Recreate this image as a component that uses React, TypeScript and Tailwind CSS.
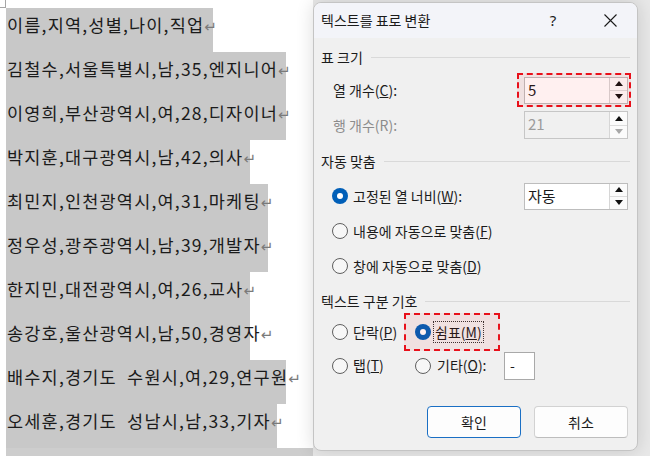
const lines = [
  { text: "이름,지역,성별,나이,직업", w: "w-[207px]" },
  { text: "김철수,서울특별시,남,35,엔지니어", w: "w-[280px]" },
  { text: "이영희,부산광역시,여,28,디자이너", w: "w-[280px]" },
  { text: "박지훈,대구광역시,남,42,의사", w: "w-[244px]" },
  { text: "최민지,인천광역시,여,31,마케팅", w: "w-[262px]" },
  { text: "정우성,광주광역시,남,39,개발자", w: "w-[262px]" },
  { text: "한지민,대전광역시,여,26,교사", w: "w-[244px]" },
  { text: "송강호,울산광역시,남,50,경영자", w: "w-[244px]" },
  { text: "배수지,경기도  수원시,여,29,연구원", w: "w-[280px]" },
  { text: "오세훈,경기도  성남시,남,33,기자", w: "w-[271px]" },
];

const Tri = ({ down, gray }: { down?: boolean; gray?: boolean }) => (
  <svg width="8" height="5" viewBox="0 0 8 5">
    <polygon
      points={down ? "0,0 8,0 4,5" : "0,5 8,5 4,0"}
      fill={gray ? "#a8a8a8" : "#111"}
    />
  </svg>
);

const Spin = ({ value, disabled }: { value: string; disabled?: boolean }) => (
  <div
    className={
      disabled
        ? "flex h-[28px] w-[104px] border border-[#c6c6c6] bg-[#f0f0f0]"
        : "flex h-[27px] w-[104px] border border-[#bdbdbd] bg-white"
    }
  >
    <div
      className={
        disabled
          ? "flex-1 pl-[3px] text-[15px] leading-[24px] text-[#9c9c9c]"
          : "flex-1 pl-[3px] text-[15px] leading-[24px] text-[#1b1b1b]"
      }
    >
      {value}
    </div>
    <div className="flex w-[18px] flex-col border-l border-[#d6d6d6]">
      <div className="flex flex-1 items-center justify-center border-b border-[#dcdcdc] bg-[#fbfbfb]">
        <Tri />
      </div>
      <div className="flex flex-1 items-center justify-center bg-[#fbfbfb]">
        <Tri down gray={disabled} />
      </div>
    </div>
  </div>
);

const Radio = ({ checked }: { checked?: boolean }) =>
  checked ? (
    <div className="flex h-[16px] w-[16px] shrink-0 items-center justify-center rounded-full bg-[#005fb8]">
      <div className="h-[6px] w-[6px] rounded-full bg-white" />
    </div>
  ) : (
    <div className="h-[16px] w-[16px] shrink-0 rounded-full border border-[#5f5f5f] bg-[#f7f7f7]" />
  );

const Section = ({ label }: { label: string }) => (
  <div className="flex h-[20px] items-center pl-[7px] pr-[7px]">
    <span className="text-[14px] leading-[20px] text-[#1b1b1b]">{label}</span>
    <div className="ml-[8px] h-px flex-1 bg-[#d9d9d9]" />
  </div>
);

export default function App() {
  return (
    <div className="flex h-[456px] w-[650px] overflow-hidden bg-white font-['Noto_Sans_CJK_KR','Noto_Sans',sans-serif] text-[#1b1b1b]">
      {/* document page */}
      <div className="flex w-[313px] shrink-0 flex-col">
        <div className="h-[8px]">
          <div className="h-[8px] w-[6px] border-b border-r border-[#a6a6a6]" />
        </div>
        {lines.map((l) => (
          <div key={l.text} className={`ml-[6px] h-[44px] bg-[#c8c8c8] ${l.w}`}>
            <div className="whitespace-pre pl-[1px] text-[17.5px] leading-[34px] tracking-[1.2px]">
              {l.text}
              <span className="font-['DejaVu_Sans',sans-serif] text-[15px] tracking-normal text-[#7a7a7a]">↵</span>
            </div>
          </div>
        ))}
        <div className="ml-[6px] flex-1 bg-[#cdcdcd]" />
      </div>

      {/* dialog area */}
      <div className="flex-1 bg-[#e8e8e8] pt-[2px]">
        <div className="relative flex h-[449px] w-[325px] flex-col overflow-hidden rounded-[8px] border border-[#c4c4c4] bg-[#f0f0f0] shadow-[0_0_18px_rgba(0,0,0,0.14)]">
          <div className="flex h-[35px] shrink-0 items-center bg-[#f3f4f9] pl-[7px]">
            <span className="text-[14px]">텍스트를 표로 변환</span>
            <div className="ml-auto w-[46px] text-center font-['Noto_Sans',sans-serif] text-[15px]">?</div>
            <div className="w-[7px]" />
            <div className="flex w-[54px] items-center justify-center">
              <svg width="13" height="13" viewBox="0 0 13 13">
                <path d="M0.5 0.5 L12.5 12.5 M12.5 0.5 L0.5 12.5" stroke="#1b1b1b" strokeWidth="1.1" />
              </svg>
            </div>
          </div>

          <div className="mt-[9px]">
            <Section label="표 크기" />
          </div>

          <div className="relative mt-[10px] flex h-[26px] items-center pl-[19px] pr-[9px] text-[14px]">
            <span>
              열 개수(<u>C</u>):
            </span>
            <div className="ml-auto">
              <Spin value="5" />
            </div>
            <div className="pointer-events-none absolute left-[203px] top-[-4px] h-[34px] w-[114px] border-2 border-dashed border-[#e8101a] bg-[rgba(255,0,0,0.06)]" />
          </div>

          <div className="mt-[8px] flex h-[28px] items-center pl-[19px] pr-[9px] text-[14px]">
            <span className="text-[#8c8c8c]">행 개수(R):</span>
            <div className="ml-auto">
              <Spin value="21" disabled />
            </div>
          </div>

          <div className="mt-[12px]">
            <Section label="자동 맞춤" />
          </div>

          <div className="mt-[11px] flex h-[28px] items-center pl-[18px] pr-[9px] text-[14px]">
            <Radio checked />
            <span className="ml-[5px]">
              고정된 열 너비(<u>W</u>):
            </span>
            <div className="ml-auto">
              <Spin value="자동" />
            </div>
          </div>
          <div className="mt-[7px] flex h-[28px] items-center pl-[18px] text-[14px]">
            <Radio />
            <span className="ml-[5px]">
              내용에 자동으로 맞춤(<u>F</u>)
            </span>
          </div>
          <div className="mt-[7px] flex h-[28px] items-center pl-[18px] text-[14px]">
            <Radio />
            <span className="ml-[5px]">
              창에 자동으로 맞춤(<u>D</u>)
            </span>
          </div>

          <div className="mt-[11px]">
            <Section label="텍스트 구분 기호" />
          </div>

          <div className="relative mt-[2px] flex h-[38px] items-center pl-[18px] text-[14px]">
            <div className="flex w-[83px] items-center">
              <Radio />
              <span className="ml-[5px]">
                단락(<u>P</u>)
              </span>
            </div>
            <div className="flex items-center">
              <Radio checked />
              <span className="ml-[2px] border border-dotted border-[#333] px-[1px] leading-[20px]">
                쉼표(<u>M</u>)
              </span>
            </div>
            <div className="pointer-events-none absolute left-[90px] top-0 h-[38px] w-[96px] border-2 border-dashed border-[#e8101a] bg-[rgba(255,0,0,0.06)]" />
          </div>

          <div className="flex h-[29px] items-center pl-[18px] text-[14px]">
            <div className="flex w-[83px] items-center">
              <Radio />
              <span className="ml-[5px]">
                탭(<u>T</u>)
              </span>
            </div>
            <div className="flex w-[89px] items-center">
              <Radio />
              <span className="ml-[6px]">
                기타(<u>O</u>):
              </span>
            </div>
            <div className="h-[28px] w-[31px] border border-[#a9a9a9] bg-white pl-[5px] text-[14px] leading-[24px]">
              -
            </div>
          </div>

          <div className="mt-[26px] flex justify-end gap-[13px] pr-[9px]">
            <button className="h-[32px] w-[94px] rounded-[4px] border border-[#1a6fc4] bg-[#fdfdfd] text-[14px]">
              확인
            </button>
            <button className="h-[32px] w-[94px] rounded-[4px] border border-[#d2d2d2] border-b-[#bdbdbd] bg-[#fdfdfd] text-[14px]">
              취소
            </button>
          </div>
        </div>
      </div>
    </div>
  );
}
